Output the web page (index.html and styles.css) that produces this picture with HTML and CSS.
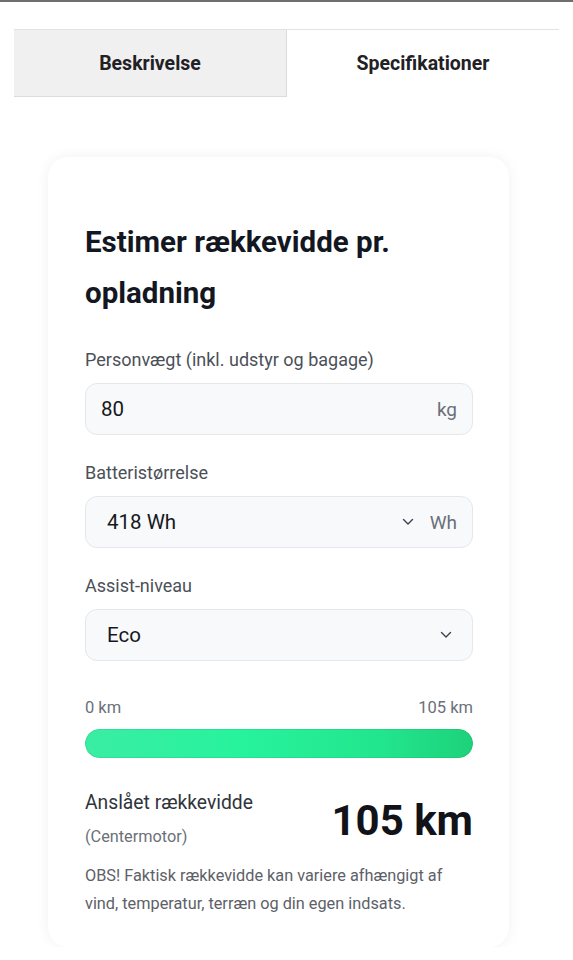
FILE: index.html
```html
<!DOCTYPE html>
<html lang="da">
<head>
    <meta charset="UTF-8">
    <meta name="viewport" content="width=device-width, initial-scale=1.0">
    <title>Specifikationer</title>
    <link rel="stylesheet" href="styles.css">
</head>
<body>
    <div class="top-line"></div>

    <div class="tabs">
        <div class="tab">Beskrivelse</div>
        <div class="tab active">Specifikationer</div>
    </div>

    <div class="range-card">
        <h2>Estimer rækkevidde pr. opladning</h2>

        <div class="field">
            <label for="weight">Personvægt (inkl. udstyr og bagage)</label>
            <div class="box">
                <span class="value">80</span>
                <span class="unit">kg</span>
            </div>
        </div>

        <div class="field">
            <label>Batteristørrelse</label>
            <div class="box select">
                <span class="value">418 Wh</span>
                <svg class="chevron" width="12" height="8" viewBox="0 0 12 8"><path d="M1.5 1.5 6 6l4.5-4.5" fill="none" stroke="#374151" stroke-width="1.4" stroke-linecap="round" stroke-linejoin="round"/></svg>
                <span class="unit">Wh</span>
            </div>
        </div>

        <div class="field">
            <label>Assist-niveau</label>
            <div class="box select">
                <span class="value">Eco</span>
                <svg class="chevron last" width="12" height="8" viewBox="0 0 12 8"><path d="M1.5 1.5 6 6l4.5-4.5" fill="none" stroke="#374151" stroke-width="1.4" stroke-linecap="round" stroke-linejoin="round"/></svg>
            </div>
        </div>

        <div class="scale">
            <span>0 km</span>
            <span>105 km</span>
        </div>
        <div class="bar"><div class="bar-fill" style="width: 100%;"></div></div>

        <div class="result">
            <div>
                <div class="result-label">Anslået rækkevidde</div>
                <div class="result-sub">(Centermotor)</div>
            </div>
            <div class="result-value">105 km</div>
        </div>

        <p class="note">OBS! Faktisk rækkevidde kan variere afhængigt af vind, temperatur, terræn og din egen indsats.</p>
    </div>
</body>
</html>
```

FILE: styles.css
```css
body {
    margin: 0;
    font-family: Roboto, "Noto Sans", "Liberation Sans", sans-serif;
    background: #fff;
    color: #111827;
}
.top-line {
    height: 2px;
    background: #6e6e6e;
}
.tabs {
    display: flex;
    margin: 27px 14px 0 14px;
    border-top: 1px solid #e3e3e3;
}
.tab {
    flex: 1;
    height: 67px;
    display: flex;
    align-items: center;
    justify-content: center;
    font-size: 19.5px;
    font-weight: 700;
    color: #1f2125;
}
.tab:first-child {
    background: #f0f0f0;
    border-bottom: 1px solid #dcdcdc;
    border-right: 1px solid #dcdcdc;
    height: 66px;
}
.range-card {
    width: 388px;
    margin: 60px 0 0 48px;
    padding: 60px 36px 29px 37px;
    background: #fff;
    border-radius: 20px;
    box-shadow: 0 0 14px rgba(0, 40, 30, 0.06);
}
.range-card h2 {
    margin: 0 0 29px 0;
    font-size: 29.5px;
    line-height: 51px;
    font-weight: 700;
    color: #131722;
}
.field {
    margin-bottom: 26px;
}
.field label {
    display: block;
    font-size: 18px;
    line-height: 24px;
    color: #4b5058;
    margin-bottom: 11px;
}
.box {
    display: flex;
    align-items: center;
    height: 50px;
    padding: 0 15px 0 15px;
    background: #f8f9fb;
    border: 1px solid #e5e7eb;
    border-radius: 12px;
}
.box.select {
    padding-left: 21px;
}
.value {
    flex: 1;
    font-size: 20.5px;
    color: #16181d;
}
.unit {
    font-size: 19px;
    color: #6b7078;
}
.chevron {
    margin-right: 16px;
}
.chevron.last {
    margin-right: 5px;
}
.scale {
    display: flex;
    justify-content: space-between;
    margin-top: 37px;
    font-size: 16.5px;
    line-height: 20px;
    color: #6b7078;
}
.bar {
    margin-top: 11px;
    height: 29px;
    border-radius: 15px;
    background: #eef0f2;
    overflow: hidden;
}
.bar-fill {
    height: 100%;
    border-radius: 15px;
    background: linear-gradient(90deg, #3aeda3 0%, #27f39d 40%, #22e68e 75%, #1dd27a 100%);
    box-shadow: inset 0 0 0 1px rgba(20, 150, 90, 0.18);
}
.result {
    display: flex;
    justify-content: space-between;
    align-items: center;
    margin-top: 32px;
}
.result-label {
    font-size: 19.3px;
    line-height: 26px;
    color: #30343b;
}
.result-sub {
    margin-top: 8px;
    font-size: 16.3px;
    line-height: 26px;
    color: #6b7078;
}
.result-value {
    font-size: 42px;
    font-weight: 700;
    color: #111318;
}
.note {
    margin: 12px 0 0 0;
    font-size: 16.3px;
    line-height: 28px;
    color: #5d6168;
}
```
